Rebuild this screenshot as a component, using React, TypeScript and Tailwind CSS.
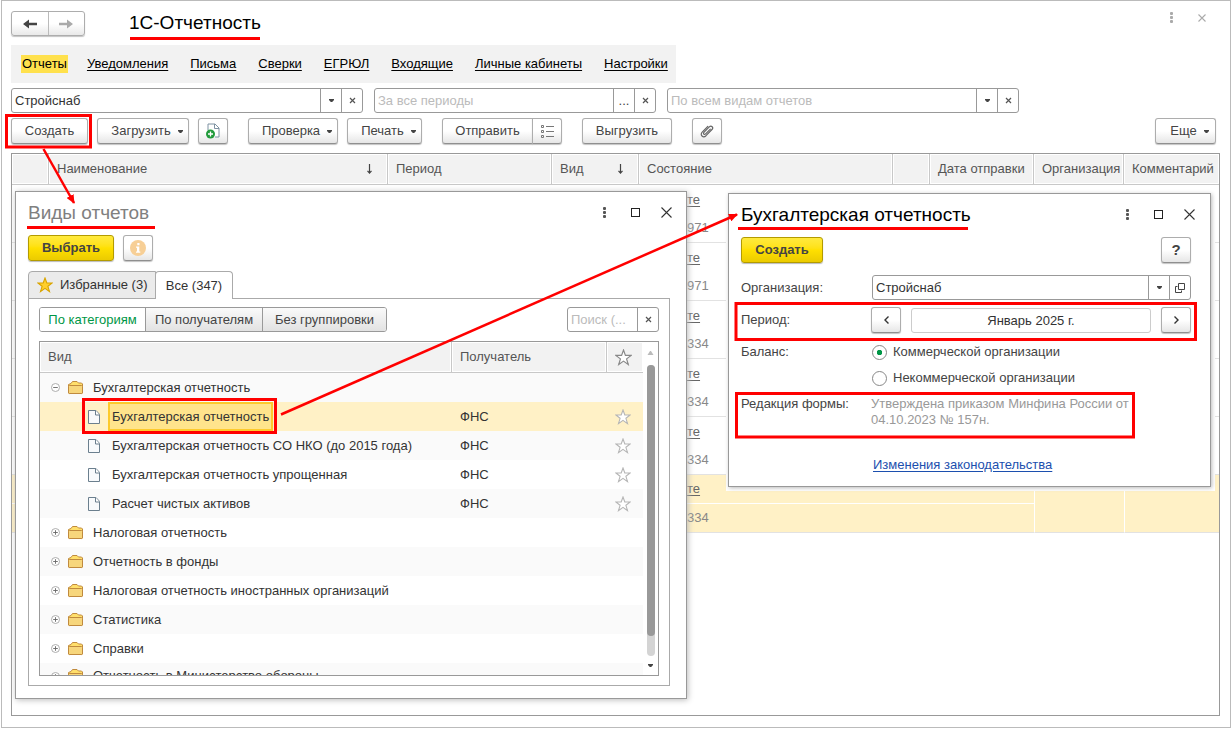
import React from 'react';

const navLinks = ['Уведомления', 'Письма', 'Сверки', 'ЕГРЮЛ', 'Входящие', 'Личные кабинеты', 'Настройки'];

const documents = ['971', '971', '334', '334', '334', '334'];

type TreeRow = { name: string; level: number; open?: boolean; selected?: boolean };

const treeRows: TreeRow[] = [
  { name: 'Бухгалтерская отчетность', level: 0, open: true },
  { name: 'Бухгалтерская отчетность', level: 1, selected: true },
  { name: 'Бухгалтерская отчетность СО НКО (до 2015 года)', level: 1 },
  { name: 'Бухгалтерская отчетность упрощенная', level: 1 },
  { name: 'Расчет чистых активов', level: 1 },
  { name: 'Налоговая отчетность', level: 0 },
  { name: 'Отчетность в фонды', level: 0 },
  { name: 'Налоговая отчетность иностранных организаций', level: 0 },
  { name: 'Статистика', level: 0 },
  { name: 'Справки', level: 0 },
  { name: 'Отчетность в Министерство обороны', level: 0 },
];

const buttonLook =
  'flex h-[26px] shrink-0 items-center justify-center rounded-[3px] border border-[#adadad] border-b-[#8f8f8f] bg-linear-to-b from-white from-50% to-[#e6e6e6] text-[#444] shadow-[0_1px_1px_#c4c4c4]';
const yellowLook =
  'flex h-[26px] items-center justify-center rounded-[3px] border border-[#b39b00] bg-linear-to-b from-[#ffea3d] via-[#ffe000] to-[#ebcb00] font-bold text-[#444] shadow-[0_1px_1px_#bbb]';

const Caret = () => (
  <svg className="h-[3px] w-[5px] shrink-0" viewBox="0 0 5 3" fill="#444">
    <path d="M0 0h5v1L3.2 3H1.8L0 1z" />
  </svg>
);

const SmallCross = () => (
  <svg className="h-[7px] w-[7px]" viewBox="0 0 7 7" stroke="#555" strokeWidth={1.2}>
    <path d="M1 1l5 5M6 1L1 6" />
  </svg>
);

const Dots = ({ className }: { className: string }) => (
  <svg className={`h-[11px] w-[3px] ${className}`} viewBox="0 0 3 11" fill="currentColor">
    <rect width="3" height="3" rx="1" />
    <rect y="4" width="3" height="3" rx="1" />
    <rect y="8" width="3" height="3" rx="1" />
  </svg>
);

const SortArrow = () => (
  <svg className="h-[10px] w-[7px]" viewBox="0 0 7 10" fill="none" stroke="#444" strokeWidth={1.2}>
    <path d="M3.5 0v9M1.5 6.800l2 2.300 2-2.300" />
  </svg>
);

const Star = ({ className }: { className: string }) => (
  <svg className={className} viewBox="0 0 16 16" strokeWidth={1.1}>
    <path d="M8 1l1.8 5h5.4l-4.3 3.3 1.6 5.3L8 11.4l-4.5 3.2 1.6-5.3L.8 6h5.4z" />
  </svg>
);

const FolderIcon = () => (
  <svg className="h-[14px] w-[15px] shrink-0" viewBox="0 0 15 14" stroke="#c08a3e" strokeWidth={1}>
    <path d="M.5 12V3.5l2.500-1 1.500-2h4.500l1.500 1.500h3l1 1V12l-.8.5H1.3z" fill="#ffdf6b" />
    <path d="M.5 5.500l1-1h12l1 1V12l-.8.5H1.3L.5 12z" fill="#f7d67c" />
  </svg>
);

const PageIcon = () => (
  <svg className="h-[14px] w-[12px] shrink-0" viewBox="0 0 12 14" fill="#f8fafc" stroke="#6b7f8e" strokeWidth={1}>
    <path d="M.5.5h7.5l3.5 3.8v9.2H.5z" />
    <path d="M7.5.5V5h4" fill="#fff" />
  </svg>
);

const Expander = ({ open }: { open?: boolean }) => (
  <svg className="h-[9px] w-[9px]" viewBox="0 0 9 9" fill="#fff" stroke="#a5a5a5" strokeWidth={0.9}>
    <circle cx="4.5" cy="4.5" r="4" />
    <path d="M2.2 4.5h4.6" stroke="#666" />
    {!open && <path d="M4.5 2.2v4.6" stroke="#666" />}
  </svg>
);

const OpenIcon = () => (
  <svg className="h-[10px] w-[10px]" viewBox="0 0 10 10" fill="none" stroke="#444" strokeWidth={1}>
    <path d="M3.5.5h6v6h-6zM2.500 3.500h-2v6h6v-2" />
  </svg>
);

const WindowControls = () => (
  <div className="-mr-1 flex items-center pb-0.5">
    <button type="button" aria-label="Меню">
      <Dots className="text-[#555]" />
    </button>
    <button type="button" aria-label="Развернуть" className="ml-[25px] h-[9px] w-[9px] border border-[#222]" />
    <button type="button" aria-label="Закрыть" className="ml-[21px]">
      <svg className="h-[11px] w-[11px]" viewBox="0 0 11 11" stroke="#333" strokeWidth={1.1}>
        <path d="M.5.5l10 10M10.5.5l-10 10" />
      </svg>
    </button>
  </div>
);

type FieldProps = {
  label?: string;
  id?: string;
  value?: string;
  placeholder?: string;
  width: string;
  actions: { name: string; icon: React.ReactNode }[];
};

const Field = ({ label, id, value, placeholder, width, actions }: FieldProps) => (
  <div className={`flex h-[25px] overflow-hidden rounded-[3px] border border-[#999] bg-white ${width}`}>
    <input
      id={id}
      aria-label={label}
      defaultValue={value}
      placeholder={placeholder}
      className="min-w-0 flex-1 px-[3px] text-[#333] outline-none placeholder:text-[#bbb]"
    />
    {actions.map((action) => (
      <button
        key={action.name}
        type="button"
        aria-label={action.name}
        className="flex w-[21px] shrink-0 items-center justify-center border-l border-[#999] text-[#444]"
      >
        {action.icon}
      </button>
    ))}
  </div>
);

const headCell =
  'h-[31px] border-b border-r border-[#c8c8c8] bg-[#f2f2f2] px-2 text-left font-normal text-[#555] shadow-[inset_0_0_0_1px_#fff]';

const DocumentsTable = () => (
  <div className="mt-[9px] flex-1 border border-[#999]">
    <table className="w-full table-fixed border-separate border-spacing-0">
      <colgroup>
        <col className="w-[37px]" />
        <col className="w-[339px]" />
        <col className="w-[164px]" />
        <col className="w-[87px]" />
        <col />
        <col className="w-[37px]" />
        <col className="w-[104px]" />
        <col className="w-[90px]" />
        <col className="w-[95px]" />
      </colgroup>
      <thead>
        <tr className="whitespace-nowrap">
          <th className={headCell} />
          <th className={headCell}>
            <div className="flex items-center justify-between pr-1.5">
              Наименование <SortArrow />
            </div>
          </th>
          <th className={headCell}>Период</th>
          <th className={headCell}>
            <div className="flex items-center justify-between pr-1.5">
              Вид <SortArrow />
            </div>
          </th>
          <th className={headCell}>Состояние</th>
          <th className={headCell} />
          <th className={headCell}>Дата отправки</th>
          <th className={headCell}>Организация</th>
          <th className={`${headCell} border-r-0`}>Комментарий</th>
        </tr>
      </thead>
      <tbody>
        {documents.map((number, index) => {
          const selected = index === documents.length - 1;
          const row = selected ? 'bg-[#fff1c6]' : '';
          const upper = selected ? 'border-b border-white' : '';
          const side = selected ? 'border-l border-l-white' : '';
          return (
            <React.Fragment key={index}>
              <tr className={row}>
                <td colSpan={4} className={upper} />
                <td className={`h-[29px] pl-12 ${upper}`}>
                  <a href="#" className="text-[#666] underline underline-offset-2">
                    те
                  </a>
                </td>
                <td colSpan={2} className={upper} />
                <td rowSpan={2} className={`border-b border-b-[#e2e2e2] ${side}`} />
                <td rowSpan={2} className={`border-b border-b-[#e2e2e2] ${side}`} />
              </tr>
              <tr className={row}>
                <td colSpan={4} className="border-b border-[#e2e2e2]" />
                <td className="h-[29px] border-b border-[#e2e2e2] pl-12 text-[#888]">{number}</td>
                <td colSpan={2} className="border-b border-[#e2e2e2]" />
              </tr>
            </React.Fragment>
          );
        })}
      </tbody>
    </table>
  </div>
);

const ReportTree = () => (
  <div className="mt-[9px] flex h-[335px] overflow-hidden border border-[#999]">
    <div className="min-w-0 flex-1 overflow-hidden">
      <table className="w-full table-fixed border-separate border-spacing-0">
        <colgroup>
          <col />
          <col className="w-[155px]" />
          <col className="w-9" />
        </colgroup>
        <thead>
          <tr>
            <th className={headCell}>Вид</th>
            <th className={headCell}>Получатель</th>
            <th className={`${headCell} border-r-0`}>
              <Star className="h-[17px] w-[17px] fill-white stroke-[#888]" />
            </th>
          </tr>
        </thead>
        <tbody className="text-[#333]">
          {treeRows.map((row, index) => (
            <tr
              key={index}
              className={`h-[29px] last:h-[26px] ${row.selected ? 'bg-[#fff1c6]' : 'odd:bg-[#fafafa]'}`}
            >
              <td className="whitespace-nowrap">
                {row.level === 0 ? (
                  <div className="flex items-center pl-[11px]">
                    <button type="button" aria-label={row.open ? 'Свернуть' : 'Развернуть'} className="mr-2">
                      <Expander open={row.open} />
                    </button>
                    <FolderIcon />
                    <span className="ml-2.5">{row.name}</span>
                  </div>
                ) : (
                  <div className="flex items-center pl-12">
                    <PageIcon />
                    <span
                      className={
                        row.selected
                          ? 'ml-2 flex h-[29px] items-center border-2 border-[#fdca2c] bg-[#ffe48c] px-0.5'
                          : 'ml-3'
                      }
                    >
                      {row.name}
                    </span>
                  </div>
                )}
              </td>
              <td className="pl-2">{row.level === 1 && 'ФНС'}</td>
              <td className="pl-2">
                {row.level === 1 && <Star className="h-4 w-4 fill-white stroke-[#b5b5b5]" />}
              </td>
            </tr>
          ))}
        </tbody>
      </table>
    </div>
    <div className="flex w-[15px] shrink-0 flex-col items-center pt-[9px] pb-2">
      <svg className="h-1 w-[7px]" viewBox="0 0 7 4" fill="#bbb">
        <path d="M.5 4L3 0h1l2.500 4z" />
      </svg>
      <div className="mt-2.5 mb-2 w-2 flex-1 rounded bg-[#d4d4d4]">
        <div className="h-[93%] rounded bg-[#999]" />
      </div>
      <Caret />
    </div>
  </div>
);

const ReportKindsDialog = () => (
  <div
    role="dialog"
    aria-label="Виды отчетов"
    className="absolute top-[190px] left-[13px] flex h-[508px] w-[672px] flex-col border border-[#999] bg-white pt-2 pr-4 pb-3 pl-3 shadow-[1px_1px_6px_#bbb]"
  >
    <div className="flex h-[26px] items-center justify-between pr-0.5">
      <h2 className="text-[19px] text-[#808080]">Виды отчетов</h2>
      <WindowControls />
    </div>
    <div className="mt-[9px] flex gap-[9px]">
      <button type="button" className={`${yellowLook} w-[86px]`}>
        Выбрать
      </button>
      <button type="button" aria-label="Справка" className={`${buttonLook} w-[30px]`}>
        <svg className="h-4 w-4" viewBox="0 0 16 16">
          <circle cx="8" cy="8" r="8" fill="#f7cf96" />
          <path d="M7.3 3h2.2v2.2H7.3zM6 6.4h3.3v5h1v1.3H6v-1.3h1V7.7H6z" fill="#fff" />
        </svg>
      </button>
    </div>
    <div role="tablist" className="relative z-10 -mb-px mt-[10px] flex text-[#333]">
      <button
        type="button"
        role="tab"
        className="flex h-7 w-32 items-center rounded-tl border border-[#aaa] bg-[#ebebeb] pl-2"
      >
        <Star className="mr-[7px] h-4 w-4 fill-[#ffcf2e] stroke-[#d9a400]" />
        Избранные (3)
      </button>
      <button
        type="button"
        role="tab"
        aria-selected="true"
        className="-ml-px h-7 w-[78px] rounded-t border border-b-0 border-[#aaa] bg-white"
      >
        Все (347)
      </button>
    </div>
    <div className="border border-[#aaa] px-2.5 pt-2 pb-[9px]">
      <div className="flex items-center justify-between">
        <div className="flex h-[25px] divide-x divide-[#999] overflow-hidden rounded-[3px] border border-[#999] text-[#444]">
          <button type="button" className="w-[106px] bg-white text-[#009646]">
            По категориям
          </button>
          <button type="button" className="w-[117px] bg-linear-to-b from-[#fafafa] to-[#e2e2e2]">
            По получателям
          </button>
          <button type="button" className="w-[123px] bg-linear-to-b from-[#fafafa] to-[#e2e2e2]">
            Без группировки
          </button>
        </div>
        <Field
          label="Поиск"
          placeholder="Поиск (..."
          width="w-[92px]"
          actions={[{ name: 'Очистить поиск', icon: <SmallCross /> }]}
        />
      </div>
      <ReportTree />
    </div>
  </div>
);

const radioLook =
  'mr-1.5 h-[15px] w-[15px] appearance-none rounded-full border border-[#888] bg-white checked:bg-[radial-gradient(circle,#009646_2.5px,transparent_3px)]';

const AccountingDialog = () => (
  <div
    role="dialog"
    aria-label="Бухгалтерская отчетность"
    className="absolute top-[192px] left-[726px] h-[294px] w-[483px] border border-[#999] bg-white pt-2 pr-[19px] pl-3 text-[#444] shadow-[1px_1px_4px_#bbb,1px_1px_0_3px_#fff]"
  >
    <div className="flex h-[26px] items-center justify-between">
      <h2 className="text-[19px] text-black">Бухгалтерская отчетность</h2>
      <WindowControls />
    </div>
    <div className="mt-[9px] flex justify-between">
      <button type="button" className={`${yellowLook} w-[82px]`}>
        Создать
      </button>
      <button type="button" className={`${buttonLook} w-[30px] text-[15px] font-bold`}>
        ?
      </button>
    </div>
    <div className="mt-3 flex items-center">
      <label htmlFor="organization" className="w-[131px]">
        Организация:
      </label>
      <Field
        id="organization"
        value="Стройснаб"
        width="flex-1"
        actions={[
          { name: 'Выбрать организацию', icon: <Caret /> },
          { name: 'Открыть', icon: <OpenIcon /> },
        ]}
      />
    </div>
    <div className="mt-[7px] flex items-center">
      <label htmlFor="period" className="w-[130px]">
        Период:
      </label>
      <button type="button" aria-label="Предыдущий период" className={`${buttonLook} w-[30px]`}>
        <svg className="h-2 w-[5px]" viewBox="0 0 5 8" fill="none" stroke="#333" strokeWidth={1.4}>
          <path d="M4.5.5L1 4l3.500 3.500" />
        </svg>
      </button>
      <input
        id="period"
        defaultValue="Январь 2025 г."
        className="mx-2.5 h-[25px] min-w-0 flex-1 rounded-[3px] border border-[#ccc] text-center text-[#333] outline-none"
      />
      <button type="button" aria-label="Следующий период" className={`${buttonLook} w-[30px]`}>
        <svg className="h-2 w-[5px]" viewBox="0 0 5 8" fill="none" stroke="#333" strokeWidth={1.4}>
          <path d="M.5.5L4 4 .5 7.500" />
        </svg>
      </button>
    </div>
    <fieldset className="mt-1.5 flex">
      <legend className="float-left h-[26px] w-[131px] leading-[26px]">Баланс:</legend>
      <div>
        <label className="flex h-[26px] items-center">
          <input type="radio" name="balance" defaultChecked className={radioLook} />
          Коммерческой организации
        </label>
        <label className="flex h-[26px] items-center">
          <input type="radio" name="balance" className={radioLook} />
          Некоммерческой организации
        </label>
      </div>
    </fieldset>
    <div className="mt-[5px] flex leading-4">
      <span className="w-[130px]">Редакция формы:</span>
      <p className="w-[262px] text-[#999]">Утверждена приказом Минфина России от 04.10.2023 № 157н.</p>
    </div>
    <a
      href="#"
      className="mt-[29px] ml-[132px] inline-block leading-4 text-[#1c4fae] underline underline-offset-2"
    >
      Изменения законодательства
    </a>
  </div>
);

const Callouts = () => (
  <svg
    className="pointer-events-none absolute top-0 left-0 z-20 h-[500px] w-[1228px]"
    viewBox="2 1 1228 500"
    fill="none"
    stroke="#f00"
    strokeWidth={3}
  >
    <defs>
      <marker id="head" viewBox="0 0 9 8" markerWidth="9" markerHeight="8" refX="8" refY="4" orient="auto" markerUnits="userSpaceOnUse">
        <path d="M0 0l9 4-9 4z" fill="#f00" stroke="none" />
      </marker>
    </defs>
    <path d="M130 38.500h130M27 227.500h128M738 228.500h230" />
    <path d="M6.500 115.500h84v31.500h-84zM83.500 399.500h192v33h-192zM736 303.500h459.500v36H736zM736.500 393.500h397v43.500h-397z" />
    <path d="M43.500 149L74 203" strokeWidth={2.5} markerEnd="url(#head)" />
    <path d="M281 414.500L737 214.500" strokeWidth={2.5} markerEnd="url(#head)" />
  </svg>
);

export default function App() {
  return (
    <div className="flex min-h-screen flex-col bg-white px-px pb-0.5 font-['Liberation_Sans',Arial,sans-serif] text-[13px]">
      <main className="relative flex flex-1 flex-col overflow-hidden border border-[#bbb] pt-2.5 pr-2.5 pb-[11px] pl-[9px]">
        <header className="flex h-[25px] items-center">
          <div className="flex h-[25px] w-[74px] divide-x divide-[#bbb] rounded-[3px] border border-[#adadad] bg-linear-to-b from-white from-50% to-[#e9e9e9] shadow-[0_1px_1px_#c4c4c4]">
            <button type="button" aria-label="Назад" className="flex flex-1 items-center justify-center">
              <svg className="h-[10px] w-[14px]" viewBox="0 0 14 10" fill="#444">
                <path d="M0 5l6-4.500v3.200h8v2.600H6v3.200z" />
              </svg>
            </button>
            <button type="button" aria-label="Вперед" className="flex flex-1 items-center justify-center">
              <svg className="h-[10px] w-[14px]" viewBox="0 0 14 10" fill="#aaa">
                <path d="M14 5L8 .5v3.200H0v2.600h8v3.200z" />
              </svg>
            </button>
          </div>
          <h1 className="ml-11 text-[19px] text-black">1С-Отчетность</h1>
          <div className="mr-[14px] mb-3 ml-auto flex items-center text-[#aaa]">
            <button type="button" aria-label="Меню" className="mr-[25px]">
              <Dots className="text-[#aaa]" />
            </button>
            <button type="button" aria-label="Закрыть">
              <svg className="h-2 w-2" viewBox="0 0 8 8" stroke="currentColor" strokeWidth={1.1}>
                <path d="M.5.5l7 7M7.500.5l-7 7" />
              </svg>
            </button>
          </div>
        </header>

        <nav className="mt-[9px] flex h-[38px] w-fit items-center gap-[22px] bg-[#f2f2f2] pr-2 pl-2.5 text-black">
          <a href="#" className="-mr-[3px] bg-[#ffe14d] px-px leading-[18px]">
            Отчеты
          </a>
          {navLinks.map((link) => (
            <a key={link} href="#" className="underline underline-offset-2">
              {link}
            </a>
          ))}
        </nav>

        <div className="mt-[5px] flex gap-[11px]">
          <Field
            label="Организация"
            value="Стройснаб"
            width="w-[352px]"
            actions={[
              { name: 'Выбрать', icon: <Caret /> },
              { name: 'Очистить', icon: <SmallCross /> },
            ]}
          />
          <Field
            label="Период"
            placeholder="За все периоды"
            width="w-[282px]"
            actions={[
              { name: 'Выбрать', icon: '...' },
              { name: 'Очистить', icon: <SmallCross /> },
            ]}
          />
          <Field
            label="Вид отчета"
            placeholder="По всем видам отчетов"
            width="w-[352px]"
            actions={[
              { name: 'Выбрать', icon: <Caret /> },
              { name: 'Очистить', icon: <SmallCross /> },
            ]}
          />
        </div>

        <div className="mt-[5px] flex">
          <button type="button" className={`${buttonLook} w-[77px]`}>
            Создать
          </button>
          <button type="button" className={`${buttonLook} ml-[9px] w-[92px] gap-[7px] pl-2`}>
            Загрузить <Caret />
          </button>
          <button type="button" aria-label="Новый файл" className={`${buttonLook} ml-[9px] w-[30px]`}>
            <svg className="h-4 w-[14px]" viewBox="0 0 14 16" fill="none">
              <path d="M2 7V1h7l4 4v9H9" fill="#fff" stroke="#7f93a3" />
              <path d="M8.500 1v4.500H13" stroke="#7f93a3" />
              <circle cx="4.500" cy="11" r="4.500" fill="#229b3c" />
              <path d="M4.500 8.500v5M2 11h5" stroke="#fff" strokeWidth={1.3} />
            </svg>
          </button>
          <button type="button" className={`${buttonLook} ml-5 w-[90px] gap-[7px] pl-2`}>
            Проверка <Caret />
          </button>
          <button type="button" className={`${buttonLook} ml-[9px] w-[75px] gap-[7px] pl-2`}>
            Печать <Caret />
          </button>
          <button type="button" className={`${buttonLook} ml-5 w-[91px] rounded-r-none`}>
            Отправить
          </button>
          <button type="button" aria-label="Список" className={`${buttonLook} -ml-px w-[30px] rounded-l-none`}>
            <svg className="h-[13px] w-[13px]" viewBox="0 0 13 13" fill="none" stroke="#777">
              <path d="M5 1.500h8M5 6.500h8M5 11.500h8" />
              <path d="M.5.5h2v2h-2zM.5 5.500h2v2h-2zM.5 10.500h2v2h-2z" />
            </svg>
          </button>
          <button type="button" className={`${buttonLook} ml-5 w-[90px]`}>
            Выгрузить
          </button>
          <button type="button" aria-label="Вложения" className={`${buttonLook} ml-5 w-[30px]`}>
            <svg className="h-[14px] w-[14px]" viewBox="0 0 14 14" fill="none" stroke="#666" strokeWidth={1.2} strokeLinecap="round">
              <path d="M10.300 5.200L5.600 9.900c-1.300 1.300-2.900-.2-1.700-1.500l5.400-5.500c2-2 4.600.6 2.700 2.600l-6 6.200c-2.900 2.800-6.500-.7-3.800-3.500l5.600-5.800" />
            </svg>
          </button>
          <button type="button" className={`${buttonLook} mr-1 ml-auto w-[61px] gap-[7px] pl-2`}>
            Еще <Caret />
          </button>
        </div>

        <DocumentsTable />
        <ReportKindsDialog />
        <AccountingDialog />
        <Callouts />
      </main>
    </div>
  );
}
